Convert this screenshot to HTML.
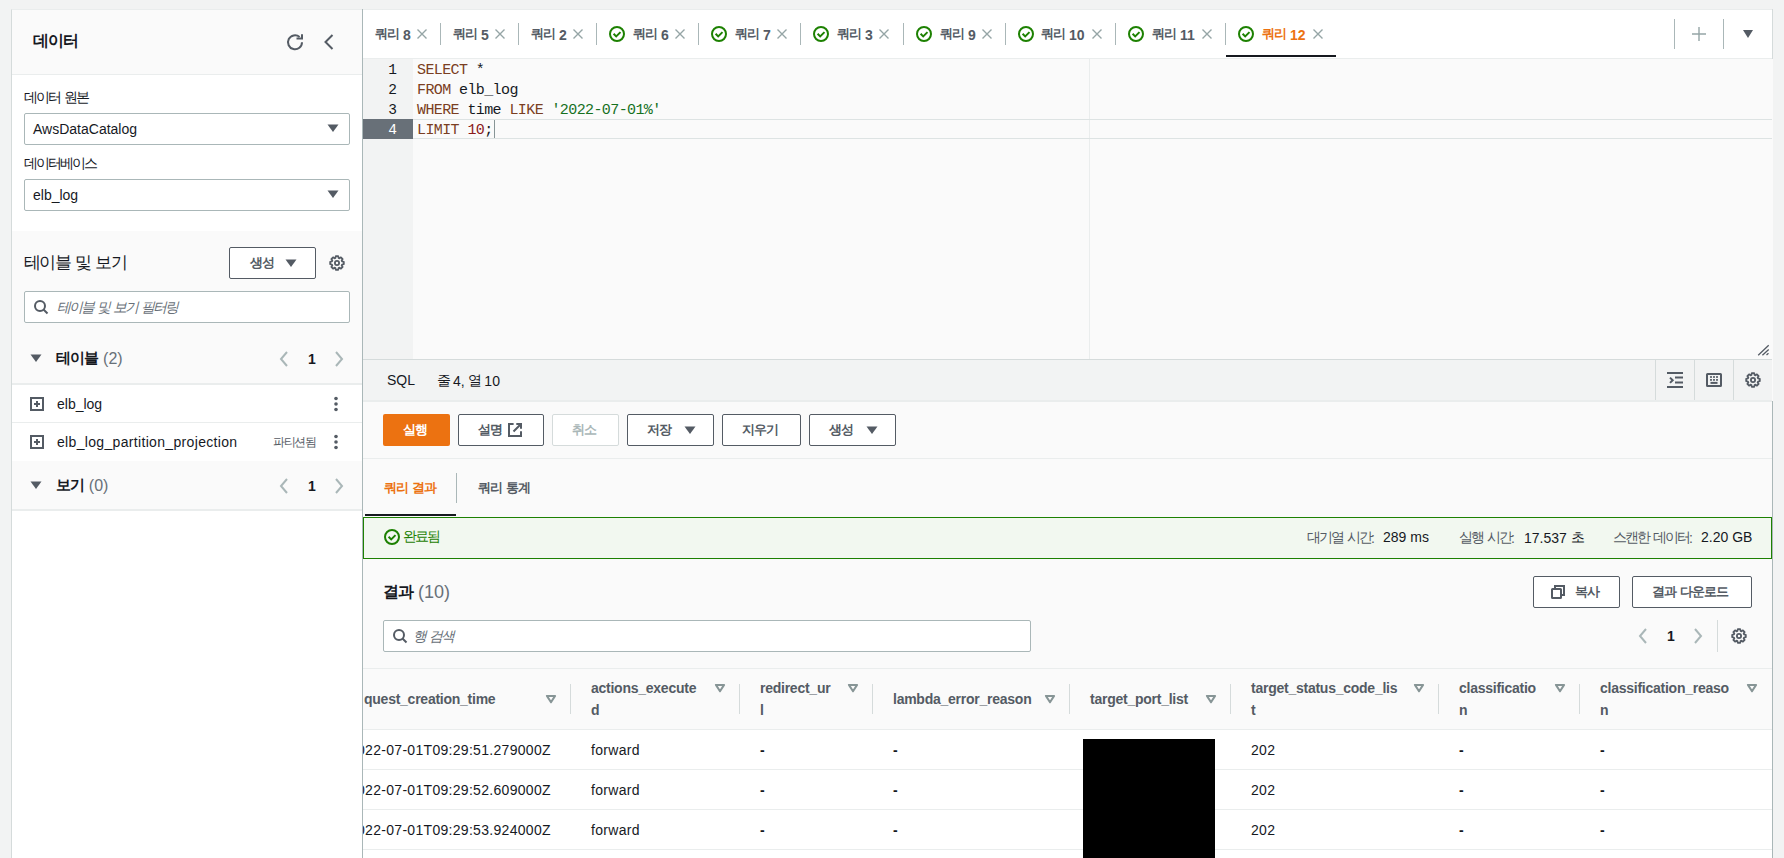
<!DOCTYPE html>
<html><head><meta charset="utf-8"><style>
*{box-sizing:border-box;margin:0;padding:0}
html,body{width:1784px;height:858px;overflow:hidden;background:#f2f3f3;font-family:"Liberation Sans",sans-serif;font-size:14px;color:#16191f}
.a{position:absolute}
.t{position:absolute;white-space:nowrap;line-height:20px}
.b{font-weight:bold}
.sec{color:#545b64}
svg{position:absolute;overflow:visible}
.r14{font-size:14px;letter-spacing:-2px;vertical-align:1px}
.b14{font-size:13px;letter-spacing:-1px;vertical-align:1.5px}
.r18{font-size:17px;letter-spacing:-1.7px;vertical-align:1px}
.b18{font-size:16px;letter-spacing:-1px;vertical-align:1.5px}
.b16{font-size:14.5px;letter-spacing:-0.8px;vertical-align:1px}
.r12{font-size:12px;letter-spacing:-1.5px;vertical-align:1px}
.mono{font-family:"Liberation Mono",monospace}
</style></head><body>
<div class="a" style="left:11px;top:9px;width:352px;height:860px;background:#fff;border-left:1px solid #d5dbdb;border-top:1px solid #eaeded"></div>
<div class="a" style="left:362px;top:9px;width:1411px;height:860px;background:#fafafa;border-top:1px solid #eaeded"></div>
<div class="a" style="left:12px;top:10px;width:350px;height:64px;background:#fafafa"></div>
<div class="a" style="left:12px;top:74px;width:350px;height:1px;background:#eaeded"></div>
<div class="t b" style="left:33px;top:30px;font-size:18px;line-height:22px"><span class="b18">데이터</span></div>
<svg style="left:287px;top:34px" width="16" height="16" viewBox="0 0 16 16"><path d="M15 8.2A7 7 0 1 1 12.6 3" fill="none" stroke="#545b64" stroke-width="2"/><path d="M9.5 4.6H15V0.2" fill="none" stroke="#545b64" stroke-width="2"/></svg>
<svg style="left:321px;top:34px" width="16" height="16" viewBox="0 0 16 16"><path d="M11.5 1L4.5 8l7 7" fill="none" stroke="#545b64" stroke-width="2"/></svg>
<div class="t " style="left:24px;top:87px;"><span class="r14">데이터</span> <span class="r14">원본</span></div>
<div class="a" style="left:24px;top:113px;width:326px;height:32px;border:1px solid #aab7b8;border-radius:2px;background:#fff"></div>
<div class="t " style="left:33px;top:119px;">AwsDataCatalog</div>
<svg style="left:327px;top:124px" width="12" height="9" viewBox="0 0 12 9"><path d="M0.5 0.5H11.5L6 8Z" fill="#545b64"/></svg>
<div class="t " style="left:24px;top:153px;"><span class="r14">데이터베이스</span></div>
<div class="a" style="left:24px;top:179px;width:326px;height:32px;border:1px solid #aab7b8;border-radius:2px;background:#fff"></div>
<div class="t " style="left:33px;top:185px;">elb_log</div>
<svg style="left:327px;top:190px" width="12" height="9" viewBox="0 0 12 9"><path d="M0.5 0.5H11.5L6 8Z" fill="#545b64"/></svg>
<div class="a" style="left:12px;top:231px;width:350px;height:153px;background:#fafafa"></div>
<div class="t " style="left:24px;top:252px;font-size:18px;line-height:22px"><span class="r18">테이블</span> <span class="r18">및</span> <span class="r18">보기</span></div>
<div class="a" style="left:229px;top:247px;width:87px;height:32px;border:1px solid #545b64;border-radius:2px;background:#fff"></div>
<div class="t b sec" style="left:250px;top:253px;"><span class="b14">생성</span></div>
<svg style="left:285px;top:259px" width="12" height="9" viewBox="0 0 12 9"><path d="M0.5 0.5H11.5L6 8Z" fill="#545b64"/></svg>
<svg style="left:329px;top:255px" width="16" height="16" viewBox="0 0 16 16"><g fill="none" stroke="#545b64" stroke-width="1.8" stroke-linejoin="round"><circle cx="8" cy="8" r="2.1"/><path d="M6.45 2.93L6.80 1.20L9.20 1.20L9.55 2.93L10.49 3.32L11.96 2.35L13.65 4.04L12.68 5.51L13.07 6.45L14.80 6.80L14.80 9.20L13.07 9.55L12.68 10.49L13.65 11.96L11.96 13.65L10.49 12.68L9.55 13.07L9.20 14.80L6.80 14.80L6.45 13.07L5.51 12.68L4.04 13.65L2.35 11.96L3.32 10.49L2.93 9.55L1.20 9.20L1.20 6.80L2.93 6.45L3.32 5.51L2.35 4.04L4.04 2.35L5.51 3.32Z"/></g></svg>
<div class="a" style="left:24px;top:291px;width:326px;height:32px;border:1px solid #aab7b8;border-radius:2px;background:#fff"></div>
<svg style="left:33px;top:299px" width="16" height="16" viewBox="0 0 16 16"><g fill="none" stroke="#545b64" stroke-width="2"><circle cx="7" cy="7" r="5"/><path d="M10.5 10.5l4 4"/></g></svg>
<div class="t " style="left:57px;top:297px;font-style:italic;color:#687078"><span class="r14">테이블</span> <span class="r14">및</span> <span class="r14">보기</span> <span class="r14">필터링</span></div>
<svg style="left:30px;top:354px" width="12" height="9" viewBox="0 0 12 9"><path d="M0.5 0.5H11.5L6 8Z" fill="#545b64"/></svg>
<div class="t " style="left:56px;top:347px;font-size:16px;line-height:22px"><b><span class="b16">테이블</span></b> <span style="color:#687078">(2)</span></div>
<svg style="left:279px;top:351px" width="10" height="16" viewBox="0 0 10 16"><path d="M8 1L2 8l6 7" fill="none" stroke="#aab7b8" stroke-width="2"/></svg>
<div class="t b" style="left:308px;top:349px;">1</div>
<svg style="left:334px;top:351px" width="10" height="16" viewBox="0 0 10 16"><path d="M2 1l6 7-6 7" fill="none" stroke="#aab7b8" stroke-width="2"/></svg>
<div class="a" style="left:12px;top:383px;width:350px;height:2px;background:#eaeded"></div>
<svg style="left:29px;top:396px" width="16" height="16" viewBox="0 0 16 16"><g fill="none" stroke="#545b64" stroke-width="2"><rect x="2" y="2" width="12" height="12"/><path d="M8 5v6M5 8h6"/></g></svg>
<div class="t " style="left:57px;top:394px;">elb_log</div>
<svg style="left:334px;top:396px" width="4" height="16" viewBox="0 0 4 16"><g fill="#545b64"><circle cx="2" cy="2.5" r="1.8"/><circle cx="2" cy="8" r="1.8"/><circle cx="2" cy="13.5" r="1.8"/></g></svg>
<div class="a" style="left:12px;top:422px;width:350px;height:1px;background:#eaeded"></div>
<svg style="left:29px;top:434px" width="16" height="16" viewBox="0 0 16 16"><g fill="none" stroke="#545b64" stroke-width="2"><rect x="2" y="2" width="12" height="12"/><path d="M8 5v6M5 8h6"/></g></svg>
<div class="t " style="left:57px;top:432px;letter-spacing:0.33px">elb_log_partition_projection</div>
<div class="t " style="left:273px;top:432px;font-size:12px;color:#545b64"><span class="r12">파티션됨</span></div>
<svg style="left:334px;top:434px" width="4" height="16" viewBox="0 0 4 16"><g fill="#545b64"><circle cx="2" cy="2.5" r="1.8"/><circle cx="2" cy="8" r="1.8"/><circle cx="2" cy="13.5" r="1.8"/></g></svg>
<div class="a" style="left:12px;top:461px;width:350px;height:49px;background:#fafafa"></div>
<svg style="left:30px;top:481px" width="12" height="9" viewBox="0 0 12 9"><path d="M0.5 0.5H11.5L6 8Z" fill="#545b64"/></svg>
<div class="t " style="left:56px;top:474px;font-size:16px;line-height:22px"><b><span class="b16">보기</span></b> <span style="color:#687078">(0)</span></div>
<svg style="left:279px;top:478px" width="10" height="16" viewBox="0 0 10 16"><path d="M8 1L2 8l6 7" fill="none" stroke="#aab7b8" stroke-width="2"/></svg>
<div class="t b" style="left:308px;top:476px;">1</div>
<svg style="left:334px;top:478px" width="10" height="16" viewBox="0 0 10 16"><path d="M2 1l6 7-6 7" fill="none" stroke="#aab7b8" stroke-width="2"/></svg>
<div class="a" style="left:12px;top:509px;width:350px;height:2px;background:#eaeded"></div>
<div class="a" style="left:363px;top:10px;width:1409px;height:48px;background:#fff"></div>
<div class="a" style="left:363px;top:58px;width:1409px;height:1px;background:#eaeded"></div>
<div class="t b" style="left:375px;top:24px;color:#545b64"><span class="b14">쿼리</span> 8</div>
<svg style="left:417px;top:29px" width="10" height="10" viewBox="0 0 10 10"><path d="M0.5 0.5l9 9M9.5 0.5l-9 9" stroke="#95a5a6" stroke-width="1.4" fill="none"/></svg>
<div class="a" style="left:440px;top:23px;width:1px;height:22px;background:#aab7b8"></div>
<div class="t b" style="left:453px;top:24px;color:#545b64"><span class="b14">쿼리</span> 5</div>
<svg style="left:495px;top:29px" width="10" height="10" viewBox="0 0 10 10"><path d="M0.5 0.5l9 9M9.5 0.5l-9 9" stroke="#95a5a6" stroke-width="1.4" fill="none"/></svg>
<div class="a" style="left:518px;top:23px;width:1px;height:22px;background:#aab7b8"></div>
<div class="t b" style="left:531px;top:24px;color:#545b64"><span class="b14">쿼리</span> 2</div>
<svg style="left:573px;top:29px" width="10" height="10" viewBox="0 0 10 10"><path d="M0.5 0.5l9 9M9.5 0.5l-9 9" stroke="#95a5a6" stroke-width="1.4" fill="none"/></svg>
<div class="a" style="left:596px;top:23px;width:1px;height:22px;background:#aab7b8"></div>
<svg style="left:609px;top:26px" width="16" height="16" viewBox="0 0 16 16"><circle cx="8" cy="8" r="7" fill="none" stroke="#1d8102" stroke-width="2"/><path d="M4.6 7.8l2.6 2.6 4.3-4.3" fill="none" stroke="#1d8102" stroke-width="2"/></svg>
<div class="t b" style="left:633px;top:24px;color:#545b64"><span class="b14">쿼리</span> 6</div>
<svg style="left:675px;top:29px" width="10" height="10" viewBox="0 0 10 10"><path d="M0.5 0.5l9 9M9.5 0.5l-9 9" stroke="#95a5a6" stroke-width="1.4" fill="none"/></svg>
<div class="a" style="left:698px;top:23px;width:1px;height:22px;background:#aab7b8"></div>
<svg style="left:711px;top:26px" width="16" height="16" viewBox="0 0 16 16"><circle cx="8" cy="8" r="7" fill="none" stroke="#1d8102" stroke-width="2"/><path d="M4.6 7.8l2.6 2.6 4.3-4.3" fill="none" stroke="#1d8102" stroke-width="2"/></svg>
<div class="t b" style="left:735px;top:24px;color:#545b64"><span class="b14">쿼리</span> 7</div>
<svg style="left:777px;top:29px" width="10" height="10" viewBox="0 0 10 10"><path d="M0.5 0.5l9 9M9.5 0.5l-9 9" stroke="#95a5a6" stroke-width="1.4" fill="none"/></svg>
<div class="a" style="left:800px;top:23px;width:1px;height:22px;background:#aab7b8"></div>
<svg style="left:813px;top:26px" width="16" height="16" viewBox="0 0 16 16"><circle cx="8" cy="8" r="7" fill="none" stroke="#1d8102" stroke-width="2"/><path d="M4.6 7.8l2.6 2.6 4.3-4.3" fill="none" stroke="#1d8102" stroke-width="2"/></svg>
<div class="t b" style="left:837px;top:24px;color:#545b64"><span class="b14">쿼리</span> 3</div>
<svg style="left:879px;top:29px" width="10" height="10" viewBox="0 0 10 10"><path d="M0.5 0.5l9 9M9.5 0.5l-9 9" stroke="#95a5a6" stroke-width="1.4" fill="none"/></svg>
<div class="a" style="left:903px;top:23px;width:1px;height:22px;background:#aab7b8"></div>
<svg style="left:916px;top:26px" width="16" height="16" viewBox="0 0 16 16"><circle cx="8" cy="8" r="7" fill="none" stroke="#1d8102" stroke-width="2"/><path d="M4.6 7.8l2.6 2.6 4.3-4.3" fill="none" stroke="#1d8102" stroke-width="2"/></svg>
<div class="t b" style="left:940px;top:24px;color:#545b64"><span class="b14">쿼리</span> 9</div>
<svg style="left:982px;top:29px" width="10" height="10" viewBox="0 0 10 10"><path d="M0.5 0.5l9 9M9.5 0.5l-9 9" stroke="#95a5a6" stroke-width="1.4" fill="none"/></svg>
<div class="a" style="left:1005px;top:23px;width:1px;height:22px;background:#aab7b8"></div>
<svg style="left:1018px;top:26px" width="16" height="16" viewBox="0 0 16 16"><circle cx="8" cy="8" r="7" fill="none" stroke="#1d8102" stroke-width="2"/><path d="M4.6 7.8l2.6 2.6 4.3-4.3" fill="none" stroke="#1d8102" stroke-width="2"/></svg>
<div class="t b" style="left:1041px;top:24px;color:#545b64"><span class="b14">쿼리</span> 10</div>
<svg style="left:1092px;top:29px" width="10" height="10" viewBox="0 0 10 10"><path d="M0.5 0.5l9 9M9.5 0.5l-9 9" stroke="#95a5a6" stroke-width="1.4" fill="none"/></svg>
<div class="a" style="left:1115px;top:23px;width:1px;height:22px;background:#aab7b8"></div>
<svg style="left:1128px;top:26px" width="16" height="16" viewBox="0 0 16 16"><circle cx="8" cy="8" r="7" fill="none" stroke="#1d8102" stroke-width="2"/><path d="M4.6 7.8l2.6 2.6 4.3-4.3" fill="none" stroke="#1d8102" stroke-width="2"/></svg>
<div class="t b" style="left:1152px;top:24px;color:#545b64"><span class="b14">쿼리</span> 11</div>
<svg style="left:1202px;top:29px" width="10" height="10" viewBox="0 0 10 10"><path d="M0.5 0.5l9 9M9.5 0.5l-9 9" stroke="#95a5a6" stroke-width="1.4" fill="none"/></svg>
<div class="a" style="left:1225px;top:23px;width:1px;height:22px;background:#aab7b8"></div>
<svg style="left:1238px;top:26px" width="16" height="16" viewBox="0 0 16 16"><circle cx="8" cy="8" r="7" fill="none" stroke="#1d8102" stroke-width="2"/><path d="M4.6 7.8l2.6 2.6 4.3-4.3" fill="none" stroke="#1d8102" stroke-width="2"/></svg>
<div class="t b" style="left:1262px;top:24px;color:#ec7211"><span class="b14">쿼리</span> 12</div>
<svg style="left:1313px;top:29px" width="10" height="10" viewBox="0 0 10 10"><path d="M0.5 0.5l9 9M9.5 0.5l-9 9" stroke="#95a5a6" stroke-width="1.4" fill="none"/></svg>
<div class="a" style="left:1226px;top:55px;width:110px;height:2px;background:#16191f"></div>
<div class="a" style="left:1674px;top:19px;width:1px;height:30px;background:#aab7b8"></div>
<div class="a" style="left:1723px;top:19px;width:1px;height:30px;background:#aab7b8"></div>
<svg style="left:1692px;top:27px" width="14" height="14" viewBox="0 0 14 14"><path d="M7 0v14M0 7h14" stroke="#95a5a6" stroke-width="1.4" fill="none"/></svg>
<svg style="left:1743px;top:30px" width="10" height="8" viewBox="0 0 10 8"><path d="M0 0H10L5 8Z" fill="#545b64"/></svg>
<div class="a" style="left:363px;top:59px;width:50px;height:300px;background:#f2f3f3"></div>
<div class="a" style="left:1089px;top:59px;width:1px;height:300px;background:#eaeded"></div>
<div class="a" style="left:413px;top:119px;width:1359px;height:1px;background:#dde3e3"></div>
<div class="a" style="left:413px;top:138px;width:1359px;height:1px;background:#dde3e3"></div>
<div class="a" style="left:363px;top:119px;width:50px;height:20px;background:#687078"></div>
<div class="a mono" style="left:363px;top:59.5px;width:34px;font-size:14.5px;line-height:20px;text-align:right;color:#16191f">1<br>2<br>3<br><span style="color:#fff">4</span></div>
<div class="a mono" style="left:417px;top:60.5px;font-size:15px;letter-spacing:-0.6px;line-height:20px;white-space:pre;color:#16191f"><span style="color:#7a3e22">SELECT</span> *
<span style="color:#7a3e22">FROM</span> elb_log
<span style="color:#7a3e22">WHERE</span> time <span style="color:#7a3e22">LIKE</span> <span style="color:#16711e">'2022-07-01%'</span>
<span style="color:#7a3e22">LIMIT</span> <span style="color:#8b1a1a">10</span>;</div>
<div class="a" style="left:494px;top:120px;width:1px;height:18px;background:#879596"></div>
<svg style="left:1756px;top:343px" width="14" height="14" viewBox="0 0 14 14"><path d="M2.2 12.2L12.7 2.2M6.4 12.2L12.7 6.5M10.5 12L12.5 10.2" stroke="#545b64" stroke-width="1.3" fill="none"/></svg>
<div class="a" style="left:363px;top:359px;width:1409px;height:1px;background:#d5dbdb"></div>
<div class="a" style="left:363px;top:360px;width:1409px;height:40px;background:#f2f3f3"></div>
<div class="a" style="left:363px;top:400px;width:1409px;height:2px;background:#eaeded"></div>
<div class="t " style="left:387px;top:370px;">SQL</div>
<div class="t " style="left:437px;top:370px;"><span class="r14">줄</span> 4, <span class="r14">열</span> 10</div>
<div class="a" style="left:1655px;top:360px;width:1px;height:40px;background:#d5dbdb"></div>
<div class="a" style="left:1694px;top:360px;width:1px;height:40px;background:#d5dbdb"></div>
<div class="a" style="left:1733px;top:360px;width:1px;height:40px;background:#d5dbdb"></div>
<svg style="left:1667px;top:372px" width="16" height="16" viewBox="0 0 16 16"><g fill="none" stroke="#545b64" stroke-width="2"><path d="M0 1h16M0 15h16M8 5.4h8M8 10.5h8"/><path d="M3 5.6l2.7 2.6-2.7 2.7" stroke-width="2"/></g></svg>
<svg style="left:1706px;top:372px" width="16" height="16" viewBox="0 0 16 16"><g fill="none" stroke="#545b64" stroke-width="2"><rect x="1" y="2" width="14" height="12" rx="0.5"/><path d="M4.5 10.9h7"/></g><g fill="#545b64"><rect x="4.1" y="4.1" width="1.8" height="1.8"/><rect x="7.1" y="4.1" width="1.8" height="1.8"/><rect x="10.1" y="4.1" width="1.8" height="1.8"/><rect x="4.1" y="7" width="1.8" height="1.8"/><rect x="7.1" y="7" width="1.8" height="1.8"/><rect x="10.1" y="7" width="1.8" height="1.8"/></g></svg>
<svg style="left:1745px;top:372px" width="16" height="16" viewBox="0 0 16 16"><g fill="none" stroke="#545b64" stroke-width="1.8" stroke-linejoin="round"><circle cx="8" cy="8" r="2.1"/><path d="M6.45 2.93L6.80 1.20L9.20 1.20L9.55 2.93L10.49 3.32L11.96 2.35L13.65 4.04L12.68 5.51L13.07 6.45L14.80 6.80L14.80 9.20L13.07 9.55L12.68 10.49L13.65 11.96L11.96 13.65L10.49 12.68L9.55 13.07L9.20 14.80L6.80 14.80L6.45 13.07L5.51 12.68L4.04 13.65L2.35 11.96L3.32 10.49L2.93 9.55L1.20 9.20L1.20 6.80L2.93 6.45L3.32 5.51L2.35 4.04L4.04 2.35L5.51 3.32Z"/></g></svg>
<div class="a" style="left:383px;top:414px;width:67px;height:32px;background:#ec7211;border-radius:2px"></div>
<div class="t b" style="left:403px;top:420px;color:#fff"><span class="b14">실행</span></div>
<div class="a" style="left:458px;top:414px;width:86px;height:32px;border:1px solid #545b64;border-radius:2px;background:#fff"></div>
<div class="t b" style="left:478px;top:420px;color:#545b64"><span class="b14">설명</span></div>
<svg style="left:508px;top:423px" width="14" height="14" viewBox="0 0 14 14"><g fill="none" stroke="#545b64" stroke-width="2"><path d="M5.6 1H1V13H13V8.3"/><path d="M8.3 1H13V5.8M13 1L5.5 8.5"/></g></svg>
<div class="a" style="left:552px;top:414px;width:67px;height:32px;border:1px solid #d5dbdb;border-radius:2px;background:#fff"></div>
<div class="t b" style="left:572px;top:420px;color:#aab7b8"><span class="b14">취소</span></div>
<div class="a" style="left:627px;top:414px;width:87px;height:32px;border:1px solid #545b64;border-radius:2px;background:#fff"></div>
<div class="t b" style="left:647px;top:420px;color:#545b64"><span class="b14">저장</span></div>
<svg style="left:684px;top:426px" width="12" height="9" viewBox="0 0 12 9"><path d="M0.5 0.5H11.5L6 8Z" fill="#545b64"/></svg>
<div class="a" style="left:722px;top:414px;width:79px;height:32px;border:1px solid #545b64;border-radius:2px;background:#fff"></div>
<div class="t b" style="left:742px;top:420px;color:#545b64"><span class="b14">지우기</span></div>
<div class="a" style="left:809px;top:414px;width:87px;height:32px;border:1px solid #545b64;border-radius:2px;background:#fff"></div>
<div class="t b" style="left:829px;top:420px;color:#545b64"><span class="b14">생성</span></div>
<svg style="left:866px;top:426px" width="12" height="9" viewBox="0 0 12 9"><path d="M0.5 0.5H11.5L6 8Z" fill="#545b64"/></svg>
<div class="a" style="left:363px;top:458px;width:1409px;height:1px;background:#eaeded"></div>
<div class="t b" style="left:384px;top:478px;color:#ec7211"><span class="b14">쿼리</span> <span class="b14">결과</span></div>
<div class="a" style="left:456px;top:473px;width:1px;height:30px;background:#aab7b8"></div>
<div class="t b sec" style="left:478px;top:478px;"><span class="b14">쿼리</span> <span class="b14">통계</span></div>
<div class="a" style="left:365px;top:514px;width:91px;height:2px;background:#16191f"></div>
<div class="a" style="left:363px;top:517px;width:1409px;height:42px;background:#f2f8f0;border:1px solid #1d8102"></div>
<svg style="left:384px;top:529px" width="16" height="16" viewBox="0 0 16 16"><circle cx="8" cy="8" r="7" fill="none" stroke="#1d8102" stroke-width="2"/><path d="M4.6 7.8l2.6 2.6 4.3-4.3" fill="none" stroke="#1d8102" stroke-width="2"/></svg>
<div class="t " style="left:403px;top:526px;color:#1d8102"><span class="r14">완료됨</span></div>
<div class="t " style="left:1307px;top:527px;color:#545b64"><span class="r14">대기열</span> <span class="r14">시간</span>:</div>
<div class="t " style="left:1383px;top:527px;">289 ms</div>
<div class="t " style="left:1459px;top:527px;color:#545b64"><span class="r14">실행</span> <span class="r14">시간</span>:</div>
<div class="t " style="left:1524px;top:527px;">17.537 <span class="r14">초</span></div>
<div class="t " style="left:1613px;top:527px;color:#545b64"><span class="r14">스캔한</span> <span class="r14">데이터</span>:</div>
<div class="t " style="left:1701px;top:527px;">2.20 GB</div>
<div class="t " style="left:383px;top:580px;font-size:18px;line-height:22px"><b><span class="b18">결과</span></b> <span style="color:#687078">(10)</span></div>
<div class="a" style="left:1533px;top:576px;width:87px;height:32px;border:1px solid #545b64;border-radius:2px;background:#fff"></div>
<div class="t b" style="left:1575px;top:582px;color:#545b64"><span class="b14">복사</span></div>
<svg style="left:1550px;top:584px" width="16" height="16" viewBox="0 0 16 16"><g fill="none" stroke="#545b64" stroke-width="2"><rect x="2" y="5" width="9" height="9" rx="0.5"/><path d="M5 4.5V2h9v9h-2.5"/></g></svg>
<div class="a" style="left:1632px;top:576px;width:120px;height:32px;border:1px solid #545b64;border-radius:2px;background:#fff"></div>
<div class="t b" style="left:1652px;top:582px;color:#545b64"><span class="b14">결과</span> <span class="b14">다운로드</span></div>
<div class="a" style="left:383px;top:620px;width:648px;height:32px;border:1px solid #aab7b8;border-radius:2px;background:#fff"></div>
<svg style="left:392px;top:628px" width="16" height="16" viewBox="0 0 16 16"><g fill="none" stroke="#545b64" stroke-width="2"><circle cx="7" cy="7" r="5"/><path d="M10.5 10.5l4 4"/></g></svg>
<div class="t " style="left:413px;top:626px;font-style:italic;color:#687078"><span class="r14">행</span> <span class="r14">검색</span></div>
<svg style="left:1638px;top:628px" width="10" height="16" viewBox="0 0 10 16"><path d="M8 1L2 8l6 7" fill="none" stroke="#aab7b8" stroke-width="2"/></svg>
<div class="t b" style="left:1667px;top:626px;">1</div>
<svg style="left:1693px;top:628px" width="10" height="16" viewBox="0 0 10 16"><path d="M2 1l6 7-6 7" fill="none" stroke="#aab7b8" stroke-width="2"/></svg>
<div class="a" style="left:1717px;top:620px;width:1px;height:32px;background:#d5dbdb"></div>
<svg style="left:1731px;top:628px" width="16" height="16" viewBox="0 0 16 16"><g fill="none" stroke="#545b64" stroke-width="1.8" stroke-linejoin="round"><circle cx="8" cy="8" r="2.1"/><path d="M6.45 2.93L6.80 1.20L9.20 1.20L9.55 2.93L10.49 3.32L11.96 2.35L13.65 4.04L12.68 5.51L13.07 6.45L14.80 6.80L14.80 9.20L13.07 9.55L12.68 10.49L13.65 11.96L11.96 13.65L10.49 12.68L9.55 13.07L9.20 14.80L6.80 14.80L6.45 13.07L5.51 12.68L4.04 13.65L2.35 11.96L3.32 10.49L2.93 9.55L1.20 9.20L1.20 6.80L2.93 6.45L3.32 5.51L2.35 4.04L4.04 2.35L5.51 3.32Z"/></g></svg>
<div class="a" style="left:363px;top:668px;width:1409px;height:1px;background:#eaeded"></div>
<div class="a" style="left:363px;top:730px;width:1409px;height:130px;background:#fff"></div>
<div class="a" style="left:363px;top:729px;width:1409px;height:1px;background:#eaeded"></div>
<div class="a" style="left:363px;top:769px;width:1409px;height:1px;background:#eaeded"></div>
<div class="a" style="left:363px;top:809px;width:1409px;height:1px;background:#eaeded"></div>
<div class="a" style="left:363px;top:849px;width:1409px;height:1px;background:#eaeded"></div>
<div class="a" style="left:363px;top:669px;width:200px;height:60px;overflow:hidden"><div class="t b sec" style="left:1px;top:19px;letter-spacing:-0.25px;line-height:22px">quest_creation_time</div>
</div>
<svg style="left:545px;top:694px" width="12" height="10" viewBox="0 0 12 10"><path d="M1.9 1.9H10.1L6 8.3Z" fill="none" stroke="#879596" stroke-width="2" stroke-linejoin="round"/></svg>
<div class="a" style="left:570px;top:684px;width:1px;height:30px;background:#d5dbdb"></div>
<div class="t b sec" style="left:591px;top:677px;letter-spacing:-0.25px;line-height:22px">actions_execute<br>d</div>
<svg style="left:714px;top:683px" width="12" height="10" viewBox="0 0 12 10"><path d="M1.9 1.9H10.1L6 8.3Z" fill="none" stroke="#879596" stroke-width="2" stroke-linejoin="round"/></svg>
<div class="a" style="left:739px;top:684px;width:1px;height:30px;background:#d5dbdb"></div>
<div class="t b sec" style="left:760px;top:677px;letter-spacing:-0.25px;line-height:22px">redirect_ur<br>l</div>
<svg style="left:847px;top:683px" width="12" height="10" viewBox="0 0 12 10"><path d="M1.9 1.9H10.1L6 8.3Z" fill="none" stroke="#879596" stroke-width="2" stroke-linejoin="round"/></svg>
<div class="a" style="left:872px;top:684px;width:1px;height:30px;background:#d5dbdb"></div>
<div class="t b sec" style="left:893px;top:688px;letter-spacing:-0.25px;line-height:22px">lambda_error_reason</div>
<svg style="left:1044px;top:694px" width="12" height="10" viewBox="0 0 12 10"><path d="M1.9 1.9H10.1L6 8.3Z" fill="none" stroke="#879596" stroke-width="2" stroke-linejoin="round"/></svg>
<div class="a" style="left:1069px;top:684px;width:1px;height:30px;background:#d5dbdb"></div>
<div class="t b sec" style="left:1090px;top:688px;letter-spacing:-0.25px;line-height:22px">target_port_list</div>
<svg style="left:1205px;top:694px" width="12" height="10" viewBox="0 0 12 10"><path d="M1.9 1.9H10.1L6 8.3Z" fill="none" stroke="#879596" stroke-width="2" stroke-linejoin="round"/></svg>
<div class="a" style="left:1230px;top:684px;width:1px;height:30px;background:#d5dbdb"></div>
<div class="t b sec" style="left:1251px;top:677px;letter-spacing:-0.25px;line-height:22px">target_status_code_lis<br>t</div>
<svg style="left:1413px;top:683px" width="12" height="10" viewBox="0 0 12 10"><path d="M1.9 1.9H10.1L6 8.3Z" fill="none" stroke="#879596" stroke-width="2" stroke-linejoin="round"/></svg>
<div class="a" style="left:1438px;top:684px;width:1px;height:30px;background:#d5dbdb"></div>
<div class="t b sec" style="left:1459px;top:677px;letter-spacing:-0.25px;line-height:22px">classificatio<br>n</div>
<svg style="left:1554px;top:683px" width="12" height="10" viewBox="0 0 12 10"><path d="M1.9 1.9H10.1L6 8.3Z" fill="none" stroke="#879596" stroke-width="2" stroke-linejoin="round"/></svg>
<div class="a" style="left:1579px;top:684px;width:1px;height:30px;background:#d5dbdb"></div>
<div class="t b sec" style="left:1600px;top:677px;letter-spacing:-0.25px;line-height:22px">classification_reaso<br>n</div>
<svg style="left:1746px;top:683px" width="12" height="10" viewBox="0 0 12 10"><path d="M1.9 1.9H10.1L6 8.3Z" fill="none" stroke="#879596" stroke-width="2" stroke-linejoin="round"/></svg>
<div class="a" style="left:363px;top:730px;width:200px;height:130px;overflow:hidden"><div class="t " style="left:-6px;top:10px;letter-spacing:0.3px">022-07-01T09:29:51.279000Z</div>
<div class="t " style="left:-6px;top:50px;letter-spacing:0.3px">022-07-01T09:29:52.609000Z</div>
<div class="t " style="left:-6px;top:90px;letter-spacing:0.3px">022-07-01T09:29:53.924000Z</div>
<div class="t " style="left:-6px;top:130px;letter-spacing:0.3px">022-07-01T09:29:54.000000Z</div>
</div>
<div class="t " style="left:591px;top:740px;letter-spacing:0.3px">forward</div>
<div class="t " style="left:760px;top:740px;font-weight:bold;color:#16191f">-</div>
<div class="t " style="left:893px;top:740px;font-weight:bold;color:#16191f">-</div>
<div class="t " style="left:1459px;top:740px;font-weight:bold;color:#16191f">-</div>
<div class="t " style="left:1600px;top:740px;font-weight:bold;color:#16191f">-</div>
<div class="t " style="left:1251px;top:740px;letter-spacing:0.3px">202</div>
<div class="t " style="left:591px;top:780px;letter-spacing:0.3px">forward</div>
<div class="t " style="left:760px;top:780px;font-weight:bold;color:#16191f">-</div>
<div class="t " style="left:893px;top:780px;font-weight:bold;color:#16191f">-</div>
<div class="t " style="left:1459px;top:780px;font-weight:bold;color:#16191f">-</div>
<div class="t " style="left:1600px;top:780px;font-weight:bold;color:#16191f">-</div>
<div class="t " style="left:1251px;top:780px;letter-spacing:0.3px">202</div>
<div class="t " style="left:591px;top:820px;letter-spacing:0.3px">forward</div>
<div class="t " style="left:760px;top:820px;font-weight:bold;color:#16191f">-</div>
<div class="t " style="left:893px;top:820px;font-weight:bold;color:#16191f">-</div>
<div class="t " style="left:1459px;top:820px;font-weight:bold;color:#16191f">-</div>
<div class="t " style="left:1600px;top:820px;font-weight:bold;color:#16191f">-</div>
<div class="t " style="left:1251px;top:820px;letter-spacing:0.3px">202</div>
<div class="t " style="left:591px;top:860px;letter-spacing:0.3px">forward</div>
<div class="t " style="left:760px;top:860px;font-weight:bold;color:#16191f">-</div>
<div class="t " style="left:893px;top:860px;font-weight:bold;color:#16191f">-</div>
<div class="t " style="left:1459px;top:860px;font-weight:bold;color:#16191f">-</div>
<div class="t " style="left:1600px;top:860px;font-weight:bold;color:#16191f">-</div>
<div class="t " style="left:1251px;top:860px;letter-spacing:0.3px">202</div>
<div class="a" style="left:1083px;top:739px;width:132px;height:130px;background:#000"></div>
<div class="a" style="left:1772px;top:9px;width:1px;height:50px;background:#d5dbdb"></div>
<div class="a" style="left:1772px;top:401px;width:1px;height:460px;background:#aab7b8"></div>
<div class="a" style="left:362px;top:9px;width:1px;height:860px;background:#aab7b8"></div>
</body></html>
